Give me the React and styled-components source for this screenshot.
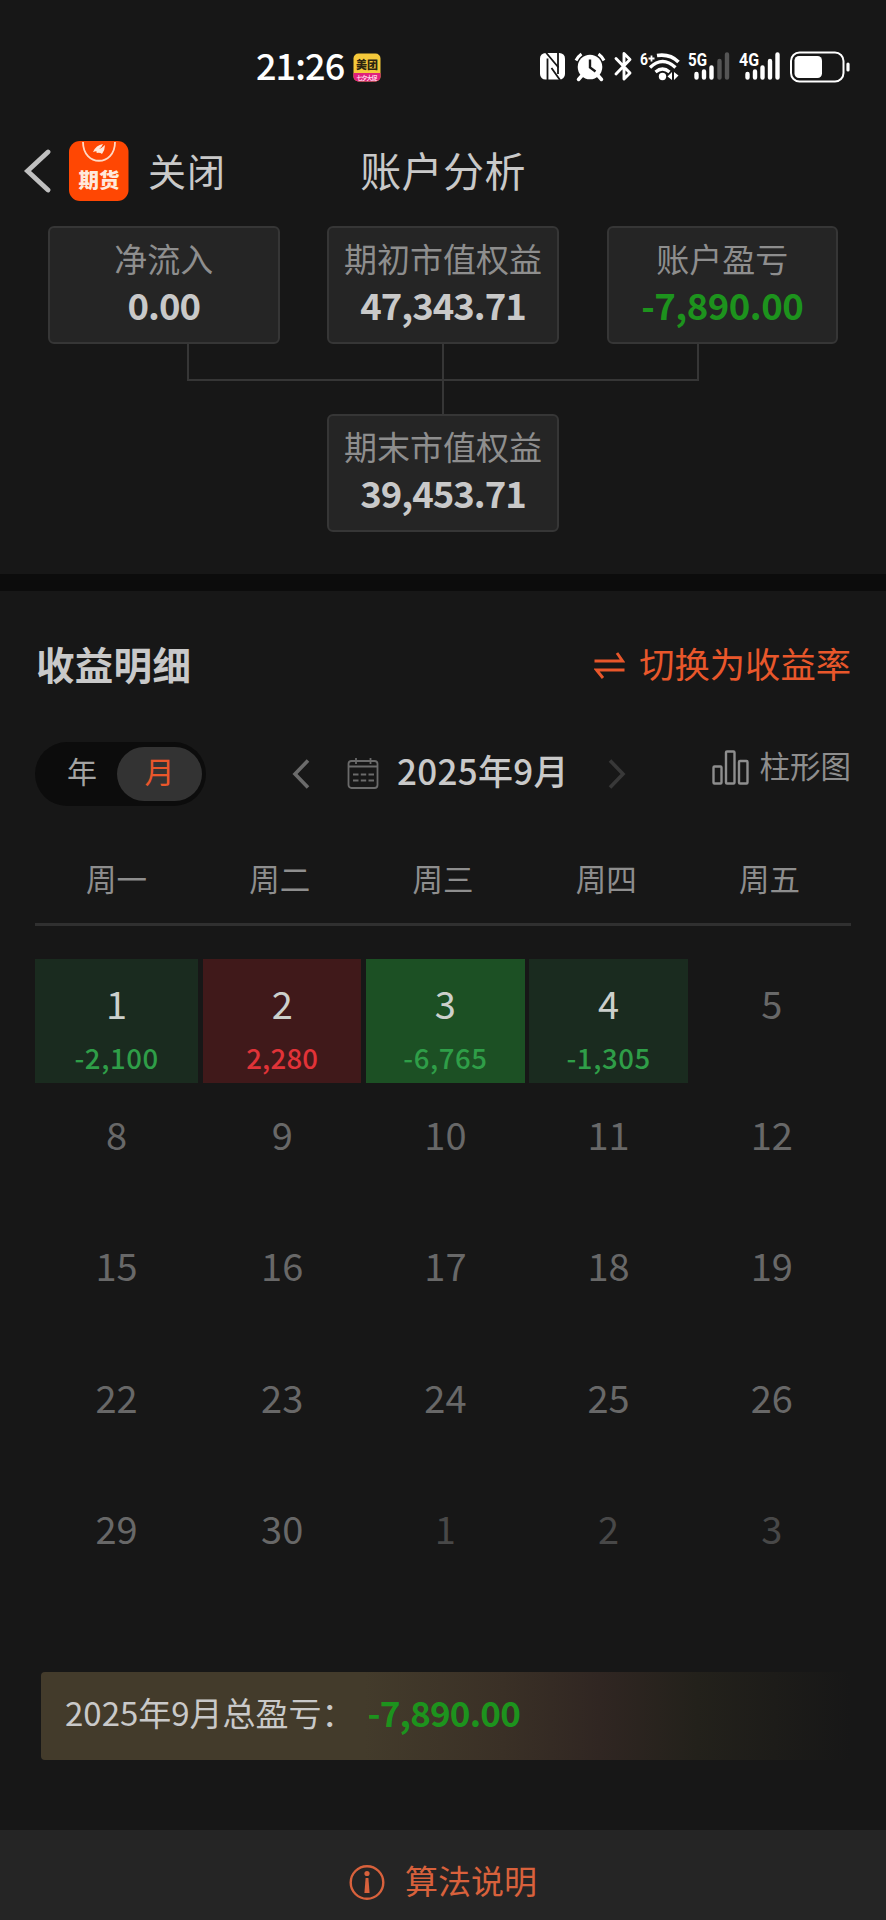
import React from 'react'
import styled, {createGlobalStyle} from 'styled-components'

const GlobalStyle = createGlobalStyle`
	* { box-sizing: border-box; }

	body {
		margin: 0;
		background: #171717;
		font-family: "Noto Sans CJK SC", "Noto Sans", sans-serif;
		color: #c9c9c9;
	}
`

const Screen = styled.div`
	width: 886px;
	height: 1920px;
	overflow: hidden;
	background: #171717;
	display: flex;
	flex-direction: column;
	white-space: nowrap;
`

const StatusBar = styled.div`
	height: 134px;
	flex: none;
	display: flex;
	align-items: center;
	padding: 0 35px 0 256px;

	svg { display: block; }
`

const Clock = styled.div`
	font-size: 36px;
	line-height: 40px;
	font-weight: 500;
	letter-spacing: -0.9px;
	color: #fff;
	width: 97px;
	padding-bottom: 6px;
`

const StatusIcons = styled.div`
	margin-left: auto;
	display: flex;
	align-items: center;
`

const NavBar = styled.div`
	height: 74px;
	flex: none;
	display: grid;
	grid-template-columns: 1fr auto 1fr;
	align-items: center;
	padding: 0 23px;
`

const NavLeft = styled.div`
	display: flex;
	align-items: center;

	svg { display: block; }
	svg + svg { margin-left: 18px; }
`

const Close = styled.span`
	margin-left: 19px;
	font-size: 38px;
	line-height: 44px;
	letter-spacing: 1px;
	padding-bottom: 3px;
`

const Title = styled.h1`
	margin: 0;
	font-size: 41px;
	line-height: 46px;
	font-weight: 400;
	letter-spacing: 0.4px;
	padding-bottom: 4px;
`

const Flow = styled.section`
	flex: none;
	padding: 18px 48px 42px;
	display: flex;
	flex-direction: column;
	align-items: center;
`

const CardRow = styled.div`
	align-self: stretch;
	display: flex;
	justify-content: space-between;
`

const Card = styled.div`
	width: 231.5px;
	height: 118px;
	background: #252525;
	border: 2px solid #363636;
	border-radius: 6px;
	display: flex;
	flex-direction: column;
	align-items: center;
	padding-top: 9px;
`

const CardLabel = styled.div`
	font-size: 33px;
	line-height: 42px;
	color: #8e8e8e;
`

const CardValue = styled.div`
	font-size: 36.5px;
	line-height: 51px;
	font-weight: 700;
	letter-spacing: ${p => p.$loss ? -0.5 : -1}px;
	color: ${p => p.$loss ? '#1d931d' : '#c9c9c9'};
`

const Branches = styled.div`
	width: 512px;
	height: 37px;
	display: grid;
	grid-template-columns: 253px 1fr;
	border: 2px solid #363636;
	border-top: 0;

	i + i { border-left: 2px solid #363636; }
`

const Stem = styled.div`
	width: 2px;
	height: 33px;
	background: #363636;
`

const Divider = styled.div`
	flex: none;
	height: 17px;
	background: #0c0c0c;
`

const Earnings = styled.section`
	flex: none;
	padding: 0 35px;
`

const Head = styled.div`
	height: 148px;
	display: flex;
	align-items: center;
	justify-content: space-between;
`

const Heading = styled.h2`
	margin: 0;
	font-size: 38.5px;
	line-height: 44px;
	font-weight: 700;
	letter-spacing: 0.3px;
	padding: 0 0 5px 1px;
`

const SwitchMode = styled.div`
	display: flex;
	align-items: center;
	color: #e9572b;
	font-size: 35.3px;
	line-height: 42px;

	svg { display: block; margin-right: 14px; }
	span { padding-bottom: 5px; }
`

const Controls = styled.div`
	height: 69px;
	display: flex;
	align-items: center;
`

const Toggle = styled.div`
	width: 171px;
	height: 64px;
	border-radius: 32px;
	background: #0c0c0c;
	display: flex;
	align-items: center;
	padding: 0 4px 0 12px;
`

const ToggleItem = styled.div`
	height: 54px;
	width: ${p => p.$active ? 85 : 70}px;
	border-radius: 27px;
	background: ${p => p.$active ? '#333' : 'none'};
	color: ${p => p.$active ? '#e9572b' : '#a4a4a4'};
	font-size: 30px;
	line-height: 47px;
	text-align: center;
`

const MonthPicker = styled.div`
	margin-left: 86px;
	display: flex;
	align-items: center;

	svg { display: block; }
	svg + svg { margin-left: 37px; }
`

const Month = styled.div`
	width: 229px;
	padding: 0 0 7px 18px;
	font-size: 35px;
	line-height: 42px;
	font-weight: 500;
	letter-spacing: 0.3px;
`

const ChartLink = styled.div`
	margin-left: auto;
	display: flex;
	align-items: center;
	color: #8e8e8e;
	font-size: 30.5px;
	line-height: 38px;
	padding-bottom: 13px;

	svg { display: block; margin-right: 11px; }
	span { padding-bottom: 4px; }
`

const Week = styled.div`
	display: grid;
	grid-template-columns: repeat(5, 1fr);
	height: 118px;
	padding-top: 24px;
	align-items: center;
	text-align: center;
	border-bottom: 3px solid #303030;
	font-size: 30.5px;
	line-height: 38px;
	color: #8e8e8e;
`

const Days = styled.div`
	margin-top: 33px;
	display: grid;
	grid-template-columns: repeat(5, 1fr);
	grid-auto-rows: 131.2px;
`

const tints = {
	loss: '#1a2b1f',
	heavyLoss: '#1c5024',
	gain: '#40191a',
}

const Day = styled.div`
	height: 124.3px;
	margin-left: 4.8px;
	padding-top: 21px;
	text-align: center;
	background: ${p => tints[p.$tint] || 'none'};
	color: ${p => p.$tint ? '#ccd0cc' : p.$outside ? '#484848' : '#686868'};
	font-size: 38px;
	line-height: 45px;

	&:nth-child(5n + 1) { margin-left: 0; }
`

const Amount = styled.div`
	margin-top: 12px;
	font-size: 27.5px;
	line-height: 40px;
	font-weight: 500;
	letter-spacing: ${p => p.$gain ? 0.2 : 0.6}px;
	color: ${p => p.$gain ? '#e13338' : '#2f9e48'};
`

const Total = styled.div`
	margin: 57px 0 0 6px;
	height: 88px;
	padding: 0 0 7px 24px;
	border-radius: 4px;
	display: flex;
	align-items: center;
	background: linear-gradient(90deg, #433b2b 0%, #433b2b 40%, #3a3026 57%, #302622 69%, #23211b 81%, #171717 100%);
	font-size: 33px;
	line-height: 42px;
`

const TotalValue = styled.span`
	margin-left: 13px;
	font-size: 35px;
	font-weight: 700;
	letter-spacing: -0.8px;
	color: #1d931d;
`

const Footer = styled.div`
	margin-top: 70px;
	flex: 1;
	background: #252525;
	color: #d8613c;
	display: flex;
	justify-content: center;
	align-items: flex-start;
	padding-top: 29px;
	font-size: 33px;
	line-height: 42px;

	svg { display: block; margin: 5px 20px 0 0; }
`

const MeituanBadge = () => (
	<svg width="28" height="29" viewBox="0 0 28 29">
		<defs>
			<clipPath id="badge"><rect x="0.5" y="0.5" width="27" height="28" rx="5"/></clipPath>
		</defs>
		<g clipPath="url(#badge)">
			<rect width="28" height="29" fill="#f5c93b"/>
			<rect y="20" width="28" height="9" fill="#e01f7c"/>
		</g>
		<text x="14" y="15.5" fontSize="11" fontWeight="900" textAnchor="middle" fill="#2c2410">美团</text>
		<text x="14" y="27" fontSize="6" fontWeight="700" textAnchor="middle" textLength="21" fill="#ffd0e4">七夕大促</text>
	</svg>
)

const StatusGlyphs = () => (
	<svg width="312" height="40" viewBox="539 47 312 40" fill="none" stroke="#fff">
		{/* nfc */}
		<rect x="540" y="53" width="25" height="26.5" rx="5.5" fill="#fff" stroke="none"/>
		<path d="M547.5 80V58.500M558 52.500V74" stroke="#171717" strokeWidth="1.800"/>
		<path d="M545.500 52L558.500 67.500M551.500 68L560 80" stroke="#171717" strokeWidth="1.800"/>

		{/* alarm */}
		<circle cx="590" cy="67" r="12.300" fill="#fff" stroke="none"/>
		<path d="M576 60.500Q578 56.500 581.500 54M598.500 54Q602 56.500 604 60.500" strokeWidth="3"/>
		<path d="M582 75.500L578.500 79.500M598 75.500L601.500 79.500" strokeWidth="3.500" strokeLinecap="round"/>
		<path d="M590 59.500V67.500L595.500 71.500" stroke="#171717" strokeWidth="2.400"/>

		{/* bluetooth */}
		<path d="M616 58.500L630 73L624 79V53.500L630 59.500L616 74" strokeWidth="2.900" strokeLinejoin="round" strokeLinecap="round"/>

		{/* wifi 6+ */}
		<text x="640" y="65" fontSize="16.500" fontWeight="700" fontFamily="Roboto" fill="#fff" stroke="none" textLength="8" lengthAdjust="spacingAndGlyphs">6</text>
		<path d="M648.500 58.500H654.500M651.500 55.500V61.500" strokeWidth="1.800"/>
		<path d="M657 55.500Q670 53.500 678.500 62" strokeWidth="3.600"/>
		<path d="M650 67.500Q662.500 55.500 675.500 67.500" strokeWidth="3.400"/>
		<path d="M655.500 72Q662.500 66 669.500 72" strokeWidth="3.200"/>
		<circle cx="662.500" cy="76.500" r="3.700" fill="#fff" stroke="none"/>
		<path d="M667.500 76.500L672 72V80ZM678.500 75.500L674 80V72Z" fill="#fff" stroke="none"/>

		{/* signal, both sims */}
		<text x="688" y="65.500" fontSize="18" fontWeight="700" fontFamily="Roboto" fill="#fff" stroke="none" textLength="19" lengthAdjust="spacingAndGlyphs">5G</text>
		<g strokeWidth="4.400" strokeLinecap="round">
			<path d="M696.500 74V77.500M704 71.500V77.500M711.500 67.500V77.500"/>
			<path d="M719.500 61V77.500M727 54.500V77.500" stroke="#555"/>
		</g>
		<text x="739" y="65.500" fontSize="18" fontWeight="700" fontFamily="Roboto" fill="#fff" stroke="none" textLength="20" lengthAdjust="spacingAndGlyphs">4G</text>
		<g strokeWidth="4.400" strokeLinecap="round">
			<path d="M747.500 74V77.500M755 71.500V77.500M762.500 67.500V77.500M770 61V77.500M777.500 54.500V77.500"/>
		</g>

		{/* battery */}
		<rect x="791" y="52.500" width="52.500" height="29" rx="8.500" strokeWidth="2"/>
		<rect x="794.500" y="56" width="27.500" height="22" rx="4.500" fill="#fff" stroke="none"/>
		<path d="M848 64V70" strokeWidth="3.200" strokeLinecap="round"/>
	</svg>
)

const BackIcon = () => (
	<svg width="28" height="46" viewBox="0 0 28 46" fill="none" stroke="#c0c0c0" strokeWidth="4.800" strokeLinecap="round">
		<path d="M25 4L4.500 23L25 42"/>
	</svg>
)

const AppIcon = () => (
	<svg width="60" height="60" viewBox="0 0 60 60">
		<rect width="59.500" height="60" rx="11" fill="#ff4703"/>
		<path d="M14 1C14 26 46 26 46 1" fill="none" stroke="#ffd9c4" strokeWidth="1.800"/>
		<path d="M24 11Q27 4 34 3Q33 6 30 8Q33 7 36 4Q36 9 33 13Q31 11 27.500 12Q29 9 24 11Z" fill="#ffe9dc"/>
		<text x="30" y="47" fontSize="20.500" fontWeight="900" textAnchor="middle" fill="#ffe9dc">期货</text>
	</svg>
)

const SwapIcon = () => (
	<svg width="31" height="28" viewBox="0 0 31 28" fill="none" stroke="currentColor" strokeWidth="2.900">
		<path d="M0.500 10H28.500L23 2M30.500 19H2.500L9 27"/>
	</svg>
)

const Chevron = ({next}) => (
	<svg width="18" height="30" viewBox="0 0 18 30" fill="none" stroke={next ? '#383838' : '#6b6b6b'} strokeWidth="3.600">
		<path d={next ? 'M2 1.500L15 15L2 28.500' : 'M16 1.500L3 15L16 28.500'}/>
	</svg>
)

const CalendarIcon = () => (
	<svg width="32" height="33" viewBox="0 0 32 33" fill="none" stroke="#6b6b6b" strokeWidth="1.800">
		<rect x="1.500" y="4" width="29" height="27" rx="3"/>
		<path d="M1.500 9.500H30.500M9 1V7M23.500 1V7M6 17.500H11.500M13.800 17.500H19.200M21.500 17.500H27M6 23.500H11.500M13.800 23.500H19.200M21.500 23.500H27"/>
	</svg>
)

const BarsIcon = () => (
	<svg width="37" height="35" viewBox="0 0 37 35" fill="none" stroke="currentColor" strokeWidth="2.400">
		<rect x="1.500" y="16.500" width="8" height="17" rx="1"/>
		<rect x="14" y="1.500" width="8.500" height="32" rx="1"/>
		<rect x="27" y="11" width="8.500" height="22.500" rx="1"/>
	</svg>
)

const InfoIcon = () => (
	<svg width="36" height="37" viewBox="0 0 36 37" fill="none" stroke="currentColor" strokeWidth="2.400">
		<circle cx="18" cy="18.500" r="16.300"/>
		<circle cx="18" cy="9.500" r="2.600" fill="currentColor" stroke="none"/>
		<path d="M16.600 14H19.400L20.600 29H15.400Z" fill="currentColor" stroke="none"/>
	</svg>
)

const weekdays = ['周一', '周二', '周三', '周四', '周五']

const days = [
	{day: 1, amount: '-2,100', tint: 'loss'},
	{day: 2, amount: '2,280', tint: 'gain'},
	{day: 3, amount: '-6,765', tint: 'heavyLoss'},
	{day: 4, amount: '-1,305', tint: 'loss'},
	...[5, 8, 9, 10, 11, 12, 15, 16, 17, 18, 19, 22, 23, 24, 25, 26, 29, 30].map(day => ({day})),
	...[1, 2, 3].map(day => ({day, outside: true})),
]

const Balance = ({label, value, loss}) => (
	<Card>
		<CardLabel>{label}</CardLabel>
		<CardValue $loss={loss}>{value}</CardValue>
	</Card>
)

const App = () => (
	<Screen>
		<GlobalStyle/>

		<StatusBar>
			<Clock>21:26</Clock>
			<MeituanBadge/>
			<StatusIcons><StatusGlyphs/></StatusIcons>
		</StatusBar>

		<NavBar>
			<NavLeft>
				<BackIcon/>
				<AppIcon/>
				<Close>关闭</Close>
			</NavLeft>
			<Title>账户分析</Title>
		</NavBar>

		<Flow>
			<CardRow>
				<Balance label="净流入" value="0.00"/>
				<Balance label="期初市值权益" value="47,343.71"/>
				<Balance label="账户盈亏" value="-7,890.00" loss/>
			</CardRow>
			<Branches><i/><i/></Branches>
			<Stem/>
			<Balance label="期末市值权益" value="39,453.71"/>
		</Flow>

		<Divider/>

		<Earnings>
			<Head>
				<Heading>收益明细</Heading>
				<SwitchMode><SwapIcon/><span>切换为收益率</span></SwitchMode>
			</Head>

			<Controls>
				<Toggle>
					<ToggleItem>年</ToggleItem>
					<ToggleItem $active>月</ToggleItem>
				</Toggle>
				<MonthPicker>
					<Chevron/>
					<CalendarIcon/>
					<Month>2025年9月</Month>
					<Chevron next/>
				</MonthPicker>
				<ChartLink><BarsIcon/><span>柱形图</span></ChartLink>
			</Controls>

			<Week>
				{weekdays.map(name => <div key={name}>{name}</div>)}
			</Week>

			<Days>
				{days.map(({day, amount, tint, outside}, i) => (
					<Day key={i} $tint={tint} $outside={outside}>
						{day}
						{amount && <Amount $gain={tint === 'gain'}>{amount}</Amount>}
					</Day>
				))}
			</Days>

			<Total>
				2025年9月总盈亏：<TotalValue>-7,890.00</TotalValue>
			</Total>
		</Earnings>

		<Footer>
			<InfoIcon/>
			算法说明
		</Footer>
	</Screen>
)

export default App
